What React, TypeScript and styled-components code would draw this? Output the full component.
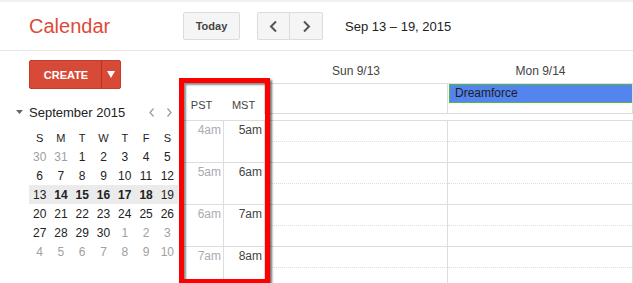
import React from 'react';
import styled, { createGlobalStyle } from 'styled-components';

const GlobalStyle = createGlobalStyle`
  html, body { margin: 0; padding: 0; background: #fff; }
  body {
    font-family: "Liberation Sans", Arial, sans-serif;
    width: 633px;
    height: 283px;
    overflow: hidden;
  }
  * { box-sizing: border-box; }
`;

const Page = styled.div`
  position: relative;
  width: 633px;
  height: 283px;
  overflow: hidden;
  border-top: 2px solid #f1f1f1;
`;

const Header = styled.header`
  display: flex;
  align-items: center;
  height: 49px;
  padding-left: 29px;
  border-bottom: 1px solid #e5e5e5;
`;

const Logo = styled.div`
  width: 154px;
  font-size: 20px;
  color: #dd4b39;
  line-height: 24px;
`;

const GreyButton = styled.button`
  height: 28px;
  border: 1px solid #dcdcdc;
  background: #f5f5f5;
  border-radius: 2px;
  padding: 0;
  margin: 0;
  font-family: inherit;
  color: #444;
  display: flex;
  align-items: center;
  justify-content: center;
`;

const TodayButton = styled(GreyButton)`
  width: 57px;
  font-size: 11px;
  font-weight: bold;
  margin-right: 17px;
`;

const NavGroup = styled.div`
  display: flex;
`;

const NavButton = styled(GreyButton)<{ $side: 'left' | 'right' }>`
  width: 33px;
  border-radius: ${(p) => (p.$side === 'left' ? '2px 0 0 2px' : '0 2px 2px 0')};
  ${(p) => (p.$side === 'right' ? 'border-left: none;' : '')}
`;

const RangeTitle = styled.div`
  margin-left: 22px;
  font-size: 13px;
  color: #222;
`;

const Body = styled.div`
  display: flex;
  height: 232px;
`;

const Sidebar = styled.aside`
  width: 180px;
  flex: none;
  padding: 9px 0 0 29px;
`;

const CreateButton = styled.div`
  display: flex;
  width: 92px;
  height: 29px;
  background: #d84a38;
  border: 1px solid #c63a28;
  border-radius: 2px;
`;

const CreateMain = styled.div`
  width: 71px;
  display: flex;
  align-items: center;
  justify-content: center;
  color: #fff;
  font-size: 11px;
  font-weight: bold;
  padding-left: 1px;
`;

const CreateArrow = styled.div`
  flex: 1;
  border-left: 1px solid #b8321f;
  display: flex;
  align-items: center;
  justify-content: center;
`;

const MiniTitle = styled.div`
  display: flex;
  align-items: center;
  height: 20px;
  margin: 13px 0 0 -13px;
  width: 162px;
`;

const MiniTriangle = styled.svg`
  margin-right: 6px;
  flex: none;
`;

const MiniMonth = styled.div`
  font-size: 13px;
  color: #222;
`;

const MiniNav = styled.div`
  margin-left: auto;
  display: flex;
  gap: 13px;
  padding-right: 6px;
`;

const MiniGrid = styled.div`
  margin-top: 6px;
  width: 149px;
`;

const WeekRow = styled.div<{ $selected?: boolean }>`
  display: grid;
  grid-template-columns: repeat(7, 1fr);
  height: 19px;
  background: ${(p) => (p.$selected ? '#ebebeb' : 'transparent')};
`;

const DayCell = styled.div<{ $muted?: boolean; $bold?: boolean; $head?: boolean }>`
  display: flex;
  align-items: center;
  justify-content: center;
  font-size: ${(p) => (p.$head ? '11px' : '12px')};
  color: ${(p) => (p.$muted ? '#a0a0a0' : '#222')};
  font-weight: ${(p) => (p.$bold ? 'bold' : 'normal')};
`;

const Main = styled.main`
  flex: 1;
  display: flex;
  flex-direction: column;
  min-width: 0;
`;

const TopSection = styled.div`
  display: flex;
  height: 69px;
`;

const TzHeader = styled.div`
  width: 84px;
  flex: none;
  display: flex;
  align-items: flex-end;
  padding-bottom: 9px;
`;

const TzLabel = styled.div<{ $w: number }>`
  width: ${(p) => p.$w}px;
  text-align: center;
  font-size: 11px;
  color: #444;
`;

const DaysHeader = styled.div`
  flex: 1;
  display: flex;
  flex-direction: column;
`;

const DayNameRow = styled.div`
  display: flex;
  height: 33px;
  border-bottom: 1px solid #ddd;
  white-space: nowrap;
`;

const DayName = styled.div<{ $w: number }>`
  width: ${(p) => p.$w}px;
  flex: none;
  display: flex;
  align-items: flex-end;
  justify-content: center;
  padding-bottom: 5px;
  font-size: 12px;
  color: #444;
`;

const AllDayRow = styled.div`
  display: flex;
  height: 30px;
  border-bottom: 1px solid #ddd;
  border-left: 1px solid #ddd;
`;

const AllDayCell = styled.div<{ $w: number }>`
  width: ${(p) => p.$w}px;
  flex: none;
  border-right: 1px solid #ddd;
  padding-left: 1px;
  overflow: hidden;
`;

const EventChip = styled.div`
  height: 19px;
  background: #5484ed;
  border: 1px solid #51b749;
  border-right: none;
  color: #1d1d1d;
  font-size: 12px;
  line-height: 17px;
  padding-left: 5px;
`;

const TimeGrid = styled.div`
  display: flex;
  border-top: 1px solid #ddd;
  flex: 1;
  overflow: hidden;
`;

const TzColumn = styled.div<{ $w: number }>`
  width: ${(p) => p.$w}px;
  flex: none;
  border-right: 1px solid #ddd;
`;

const HourLabel = styled.div<{ $muted?: boolean }>`
  height: 42px;
  border-bottom: 1px solid #ddd;
  text-align: right;
  padding: 2px 2px 0 0;
  font-size: 12px;
  color: ${(p) => (p.$muted ? '#a9abb2' : '#444')};
`;

const DayColumn = styled.div<{ $w: number }>`
  width: ${(p) => p.$w}px;
  flex: none;
  border-right: 1px solid #ddd;
`;

const HalfSlot = styled.div<{ $dotted?: boolean }>`
  height: 21px;
  border-bottom: 1px ${(p) => (p.$dotted ? 'dotted' : 'solid')} #ddd;
`;

const Highlight = styled.div`
  position: absolute;
  left: 179px;
  top: 76px;
  width: 91px;
  height: 206px;
  border: 5px solid #ff0000;
  box-shadow: 2px 2px 2px rgba(0, 0, 0, 0.55), inset 2px 2px 2px rgba(0, 0, 0, 0.45);
  pointer-events: none;
`;

const Chevron = ({ dir }: { dir: 'left' | 'right' }) => (
  <svg width="9" height="13" viewBox="0 0 9 13">
    <path
      d={dir === 'left' ? 'M7 1.5 L2 6.5 L7 11.5' : 'M2 1.5 L7 6.5 L2 11.5'}
      stroke="#555"
      strokeWidth="2"
      fill="none"
    />
  </svg>
);

const SmallChevron = ({ dir }: { dir: 'left' | 'right' }) => (
  <svg width="5" height="9" viewBox="0 0 5 9">
    <path
      d={dir === 'left' ? 'M4.5 0.5 L1 4.5 L4.5 8.5' : 'M0.5 0.5 L4 4.5 L0.5 8.5'}
      stroke="#999"
      strokeWidth="1.2"
      fill="none"
    />
  </svg>
);

type Day = { n: number; muted?: boolean; bold?: boolean };

const weeks: { days: Day[]; selected?: boolean }[] = [
  { days: [{ n: 30, muted: true }, { n: 31, muted: true }, { n: 1 }, { n: 2 }, { n: 3 }, { n: 4 }, { n: 5 }] },
  { days: [6, 7, 8, 9, 10, 11, 12].map((n) => ({ n })) },
  {
    selected: true,
    days: [{ n: 13 }, { n: 14, bold: true }, { n: 15, bold: true }, { n: 16, bold: true }, { n: 17, bold: true }, { n: 18, bold: true }, { n: 19 }],
  },
  { days: [20, 21, 22, 23, 24, 25, 26].map((n) => ({ n })) },
  { days: [{ n: 27 }, { n: 28 }, { n: 29 }, { n: 30 }, { n: 1, muted: true }, { n: 2, muted: true }, { n: 3, muted: true }] },
  { days: [4, 5, 6, 7, 8, 9, 10].map((n) => ({ n, muted: true })) },
];

const dayLetters = ['S', 'M', 'T', 'W', 'T', 'F', 'S'];
const hours = [4, 5, 6, 7];
const dayCols = [182, 184, 184];

export default function App() {
  return (
    <>
      <GlobalStyle />
      <Page>
        <Header>
          <Logo>Calendar</Logo>
          <TodayButton>Today</TodayButton>
          <NavGroup>
            <NavButton $side="left">
              <Chevron dir="left" />
            </NavButton>
            <NavButton $side="right">
              <Chevron dir="right" />
            </NavButton>
          </NavGroup>
          <RangeTitle>Sep 13 – 19, 2015</RangeTitle>
        </Header>
        <Body>
          <Sidebar>
            <CreateButton>
              <CreateMain>CREATE</CreateMain>
              <CreateArrow>
                <svg width="8" height="7" viewBox="0 0 8 7">
                  <polygon points="0,0 8,0 4,7" fill="#fff" />
                </svg>
              </CreateArrow>
            </CreateButton>
            <MiniTitle>
              <MiniTriangle width="7" height="4" viewBox="0 0 7 4">
                <polygon points="0,0 7,0 3.5,4" fill="#666" />
              </MiniTriangle>
              <MiniMonth>September 2015</MiniMonth>
              <MiniNav>
                <SmallChevron dir="left" />
                <SmallChevron dir="right" />
              </MiniNav>
            </MiniTitle>
            <MiniGrid>
              <WeekRow>
                {dayLetters.map((l, i) => (
                  <DayCell key={i} $head>
                    {l}
                  </DayCell>
                ))}
              </WeekRow>
              {weeks.map((w, wi) => (
                <WeekRow key={wi} $selected={w.selected}>
                  {w.days.map((d, di) => (
                    <DayCell key={di} $muted={d.muted} $bold={d.bold}>
                      {d.n}
                    </DayCell>
                  ))}
                </WeekRow>
              ))}
            </MiniGrid>
          </Sidebar>
          <Main>
            <TopSection>
              <TzHeader>
                <TzLabel $w={43}>PST</TzLabel>
                <TzLabel $w={41}>MST</TzLabel>
              </TzHeader>
              <DaysHeader>
                <DayNameRow>
                  <DayName $w={184}>Sun 9/13</DayName>
                  <DayName $w={185}>Mon 9/14</DayName>
                </DayNameRow>
                <AllDayRow>
                  <AllDayCell $w={183} />
                  <AllDayCell $w={185}>
                    <EventChip>Dreamforce</EventChip>
                  </AllDayCell>
                  <AllDayCell $w={185} />
                </AllDayRow>
              </DaysHeader>
            </TopSection>
            <TimeGrid>
              <TzColumn $w={44}>
                {hours.map((h) => (
                  <HourLabel key={h} $muted>
                    {h}am
                  </HourLabel>
                ))}
              </TzColumn>
              <TzColumn $w={41}>
                {hours.map((h) => (
                  <HourLabel key={h}>{h + 1}am</HourLabel>
                ))}
              </TzColumn>
              {dayCols.map((w, i) => (
                <DayColumn key={i} $w={w + 1}>
                  {hours.map((h) => (
                    <React.Fragment key={h}>
                      <HalfSlot $dotted />
                      <HalfSlot />
                    </React.Fragment>
                  ))}
                </DayColumn>
              ))}
            </TimeGrid>
          </Main>
        </Body>
        <Highlight />
      </Page>
    </>
  );
}
